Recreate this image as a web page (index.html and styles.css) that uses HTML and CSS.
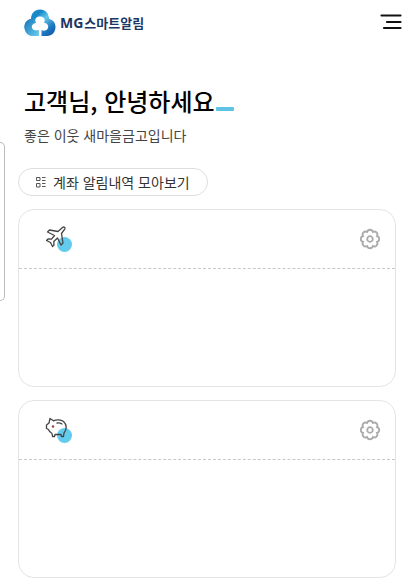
FILE: index.html
```html
<!DOCTYPE html>
<html lang="ko">
<head>
<meta charset="utf-8">
<meta name="viewport" content="width=device-width, initial-scale=1">
<title>MG스마트알림</title>
<link rel="stylesheet" href="styles.css">
</head>
<body>
<svg class="defs" aria-hidden="true">
  <symbol id="gear" viewBox="-11 -11 22 22">
    <path d="M7 2.900A3 3 0 0 1 2.900 7A3 3 0 0 1-2.900 7A3 3 0 0 1-7 2.900A3 3 0 0 1-7-2.900A3 3 0 0 1-2.900-7A3 3 0 0 1 2.900-7A3 3 0 0 1 7-2.900A3 3 0 0 1 7 2.900Z"/>
    <circle r="2.800"/>
  </symbol>
</svg>

<header class="header">
  <a class="brand" href="#">
    <svg class="brand-mark" viewBox="0 0 32 28" aria-hidden="true">
      <defs>
        <linearGradient id="cloud" x1="0" y1="0" x2="1" y2="1">
          <stop offset="0" stop-color="#2c9bd6"/>
          <stop offset=".3" stop-color="#1686c6"/>
          <stop offset=".5" stop-color="#62c8ea"/>
          <stop offset=".75" stop-color="#1f78c0"/>
          <stop offset="1" stop-color="#0c4e9c"/>
        </linearGradient>
        <linearGradient id="cloud-left" x1="0" y1="0" x2="1" y2="1">
          <stop offset="0" stop-color="#1574b8"/>
          <stop offset="1" stop-color="#69cdec"/>
        </linearGradient>
      </defs>
      <path fill="url(#cloud)" d="M7 10C7 4.500 10.500.500 16 .500S25 4.500 25 10C29 10.500 31.500 14 31.500 18C31.500 23 28 27 23 27H17.500V21C19 22 22 22 23.500 20C25.500 17 23 13.500 20 14C22 10 19.500 7.500 16 7.500S10 10 12 14C9 13.500 6.500 17 8.500 20C10 22 13 22 14.500 21V27H9C4 27 .500 23 .500 18C.500 14 3 10.500 7 10Z"/>
      <path fill="url(#cloud-left)" d="M7 10C9 10 11 11.500 12 14C9 13.500 6.500 17 8.500 20C10 22 13 22 14.500 21V27H9C4 27 .500 23 .500 18C.500 14 3 10.500 7 10Z"/>
    </svg>
    <span class="brand-name"><span class="brand-mg">MG</span>스마트알림</span>
  </a>
  <button class="menu" type="button" aria-label="메뉴">
    <svg viewBox="0 0 22 16" aria-hidden="true"><path d="M1.500 1.500H20.500M7 8H20.500M4 14H20.500"/></svg>
  </button>
</header>

<main class="main">
  <section class="greeting">
    <h1 class="title">고객님, 안녕하세요<span class="title-bar"></span></h1>
    <p class="subtitle">좋은 이웃 새마을금고입니다</p>
  </section>

  <button class="collect" type="button">
    <svg viewBox="0 0 12 12" aria-hidden="true"><path d="M1.500 1.500h3.500v3h-3.500zM1.500 7.500h3.500v3.500h-3.500zM7 1.500h3.500M7 4.500h3.500M7 7.500h3.500M7 10.500h3.500"/></svg>
    계좌 알림내역 모아보기
  </button>

  <section class="card">
    <div class="card-head">
      <svg class="card-icon" viewBox="0 0 28 28" aria-hidden="true">
        <circle class="dot" cx="19.500" cy="19.500" r="7.500"/>
        <path class="line" d="M13 6.500L17.500 2.500C19 1.300 20.800 2.500 19.700 4.200L16.500 8.500L18 18L16 20L12.500 13L8.800 16.500L9 20L7.500 21.500L5.500 17.500L1.500 15.500L3 14L6.500 14.200L9.500 10.500L2.500 7L4.500 5Z"/>
      </svg>
      <button class="settings" type="button" aria-label="입출금 알림 설정"><svg aria-hidden="true"><use href="#gear"/></svg></button>
    </div>
    <div class="card-body"></div>
  </section>

  <section class="card">
    <div class="card-head">
      <svg class="card-icon" viewBox="0 0 28 28" aria-hidden="true">
        <circle class="dot" cx="19.500" cy="19.500" r="7.500"/>
        <path class="line" d="M5 2.500L8.500 4.800C11 3.500 16 3.500 18.500 5.500C22 8.500 22 13.500 19 17L18.500 20.500H16.500L16 18.500H10L9.500 20.500H7.500L7 17.500C5 16.500 4 15 3.500 13.500L1.500 12.500V9L4 7Z"/>
        <path class="line" d="M12 7C14 6.700 15.500 7 17 8"/>
        <circle class="eye" cx="8" cy="10.500" r="1.200"/>
      </svg>
      <button class="settings" type="button" aria-label="저축 알림 설정"><svg aria-hidden="true"><use href="#gear"/></svg></button>
    </div>
    <div class="card-body"></div>
  </section>
</main>

<div class="edge-handle" aria-hidden="true"></div>
</body>
</html>
```
FILE: styles.css
```css
* {
  box-sizing: border-box;
}

body {
  margin: 0;
  background: #fff;
  color: #111;
  font-family: "Noto Sans CJK KR", "Noto Sans", sans-serif;
}

button {
  margin: 0;
  padding: 0;
  border: 0;
  background: none;
  color: inherit;
  font: inherit;
}

svg {
  display: block;
  fill: none;
}

.defs {
  position: absolute;
  width: 0;
  height: 0;
}

.header {
  display: flex;
  align-items: center;
  justify-content: space-between;
  height: 46px;
  padding: 0 12px 0 24px;
}

.brand {
  display: flex;
  align-items: center;
  gap: 4px;
  color: #1c3764;
  text-decoration: none;
}

.brand-mark {
  width: 32px;
  height: 28px;
}

.brand-name {
  font-size: 13px;
  font-weight: 700;
  line-height: 20px;
}

.brand-mg {
  margin-right: 1px;
  font-family: "Open Sans", sans-serif;
  font-size: 14px;
}

.menu {
  padding-bottom: 2px;
}

.menu svg {
  width: 22px;
  height: 16px;
  stroke: #111;
  stroke-width: 2.2;
  stroke-linecap: round;
}

.main {
  padding: 37px 18px 8px;
}

.greeting {
  padding: 0 6px;
}

.title {
  margin: 0;
  color: #000;
  font-size: 24px;
  font-weight: 500;
  line-height: 36px;
}

.title-bar {
  display: inline-block;
  width: 18px;
  height: 4px;
  margin-left: 1px;
  border-radius: 1px;
  background: #5fc3e4;
}

.subtitle {
  margin: 4px 0 0;
  color: #444;
  font-size: 14px;
  line-height: 24px;
}

.collect {
  display: flex;
  align-items: center;
  gap: 6px;
  height: 28px;
  margin: 21px 0 13px;
  padding: 0 17px 0 16px;
  border: 1px solid #dedede;
  border-radius: 14px;
  color: #333;
  font-size: 14px;
}

.collect svg {
  width: 12px;
  height: 12px;
  stroke: #555;
}

.card {
  border: 1px solid #e4e4e4;
  border-radius: 16px;
}

.card + .card {
  margin-top: 13px;
}

.card-head {
  display: flex;
  align-items: center;
  justify-content: space-between;
  height: 59px;
  padding: 0 14px 0 26px;
  border-bottom: 1px dashed #c8c8c8;
}

.card-icon {
  width: 28px;
  height: 28px;
}

.dot {
  fill: #63cbed;
}

.line {
  stroke: #444;
  stroke-width: 1.3;
  stroke-linejoin: round;
  stroke-linecap: round;
}

.eye {
  fill: #a33a3a;
}

.settings svg {
  width: 22px;
  height: 22px;
  stroke: #aaa;
  stroke-width: 1.8;
}

.card-body {
  min-height: 117px;
}

.edge-handle {
  position: absolute;
  top: 142px;
  left: 0;
  width: 5px;
  height: 159px;
  border: 1px solid #bbb;
  border-left: 0;
  border-radius: 0 5px 5px 0;
}
```
